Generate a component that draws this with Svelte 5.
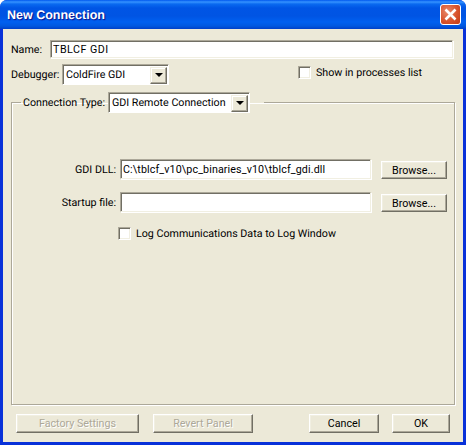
<script>
  let name = 'TBLCF GDI';
  let dllPath = 'C:\\tblcf_v10\\pc_binaries_v10\\tblcf_gdi.dll';
  let startupFile = '';
</script>

<div class="window">
  <header class="titlebar">
    <span class="title">New Connection</span>
    <button class="close" aria-label="Close">
      <svg viewBox="0 0 19 19" width="19" height="19">
        <path d="M4.5 4.5l10 10M14.5 4.5l-10 10" stroke="#fff" stroke-width="2.6" fill="none" />
      </svg>
    </button>
  </header>

  <div class="client">
    <div class="row name-row">
      <span class="label name-label">Name:</span>
      <input class="field name-field" bind:value={name} />
    </div>

    <div class="row debugger-row">
      <span class="label debugger-label">Debugger:</span>
      <div class="combo debugger-combo">
        <span class="combo-text">ColdFire GDI</span>
        <span class="combo-btn"><i class="arrow"></i></span>
      </div>
      <label class="check show-check">
        <span class="box"></span>
        <span>Show in processes list</span>
      </label>
    </div>

    <fieldset class="group">
      <legend class="legend">
        <span class="label type-label">Connection Type:</span>
        <div class="combo type-combo">
          <span class="combo-text">GDI Remote Connection</span>
          <span class="combo-btn"><i class="arrow"></i></span>
        </div>
      </legend>

      <div class="row file-row dll-row">
        <span class="label file-label">GDI DLL:</span>
        <input class="field file-field" bind:value={dllPath} />
        <button class="btn browse">Browse...</button>
      </div>
      <div class="row file-row startup-row">
        <span class="label file-label">Startup file:</span>
        <input class="field file-field" bind:value={startupFile} />
        <button class="btn browse">Browse...</button>
      </div>
      <label class="check log-check">
        <span class="box"></span>
        <span>Log Communications Data to Log Window</span>
      </label>
    </fieldset>

    <footer class="footer">
      <button class="btn factory" disabled>Factory Settings</button>
      <button class="btn revert" disabled>Revert Panel</button>
      <button class="btn cancel">Cancel</button>
      <button class="btn ok">OK</button>
    </footer>
  </div>
</div>

<style>
  :global(body) {
    margin: 0;
    background: #fff;
  }

  .window {
    width: 466px;
    height: 445px;
    display: flex;
    flex-direction: column;
    font-family: Roboto, "Liberation Sans", Arial, sans-serif;
    font-size: 10.7px;
    text-rendering: geometricPrecision;
    color: #000;
    background: #0831d9;
    border-radius: 7px 7px 0 0;
    overflow: hidden;
  }

  .titlebar {
    height: 29px;
    flex: none;
    display: flex;
    align-items: center;
    justify-content: space-between;
    padding: 0 5px 0 7px;
    background: linear-gradient(180deg, #0058ee 0, #3593ff 2px, #0a6af0 4px, #0055e5 8px, #0054e3 16px, #0060f0 22px, #0058e0 26px, #0040c8 29px);
  }

  .title {
    color: #fff;
    font-family: "Liberation Sans", Arial, sans-serif;
    font-weight: bold;
    font-size: 12.5px;
    text-shadow: 1px 1px 1px #0f1089;
  }

  .close {
    width: 21px;
    height: 21px;
    padding: 0;
    display: flex;
    align-items: center;
    justify-content: center;
    border: 1px solid #fff;
    border-radius: 3px;
    background: radial-gradient(circle at 35% 35%, #e88a6c, #d8542e 55%, #c23a14);
  }

  .client {
    flex: 1;
    min-height: 0;
    margin: 0 3px 3px 3px;
    padding: 11px 8px 9px 8px;
    display: flex;
    flex-direction: column;
    background: #ece9d8;
  }

  .row {
    display: flex;
    align-items: center;
  }

  .label {
    white-space: nowrap;
  }

  .name-label {
    width: 39px;
    flex: none;
  }

  .debugger-label {
    width: 51px;
    flex: none;
  }

  .field {
    box-sizing: border-box;
    height: 20px;
    padding: 1px 2px 0 2px;
    font: inherit;
    letter-spacing: 0.12px;
    color: #000;
    background: #fff;
    border: 1px solid;
    border-color: #aca899 #f1efe2 #f1efe2 #aca899;
    box-shadow: inset 1px 1px 0 #716f64, 1px 1px 0 #fff;
    outline: none;
  }

  .name-field {
    width: 403px;
    height: 18px;
    letter-spacing: 0.5px;
  }

  .debugger-row {
    margin-top: 6px;
    height: 21px;
  }

  .combo {
    box-sizing: border-box;
    height: 21px;
    display: flex;
    align-items: center;
    justify-content: space-between;
    padding: 0 1px 0 2px;
    background: #fff;
    border: 1px solid;
    border-color: #aca899 #fff #fff #aca899;
    box-shadow: inset 1px 1px 0 #716f64;
  }

  .combo-text {
    padding-left: 1px;
    white-space: nowrap;
  }

  .combo-btn {
    box-sizing: border-box;
    width: 17px;
    height: 17px;
    margin-top: 1px;
    display: flex;
    align-items: center;
    justify-content: center;
    background: #ece9d8;
    border: 1px solid;
    border-color: #f1efe2 #716f64 #716f64 #f1efe2;
    box-shadow: inset -1px -1px 0 #aca899, inset 1px 1px 0 #fff;
  }

  .arrow {
    width: 0;
    height: 0;
    border-left: 4px solid transparent;
    border-right: 4px solid transparent;
    border-top: 4px solid #000;
  }

  .debugger-combo {
    width: 107px;
  }

  .check {
    display: flex;
    align-items: center;
    gap: 5px;
  }

  .box {
    box-sizing: border-box;
    width: 13px;
    height: 13px;
    flex: none;
    background: #fff;
    border: 1px solid;
    border-color: #aca899 #fff #fff #aca899;
    box-shadow: inset 1px 1px 0 #716f64, inset -1px -1px 0 #f1efe2;
  }

  .show-check {
    margin-left: 129px;
    margin-top: -4px;
  }

  .group {
    flex: 1;
    min-height: 0;
    min-width: 0;
    margin: 7px 0 0 0;
    padding: 0;
    border: 1px solid #aca899;
    box-shadow: 1px 1px 0 #fff, inset 1px 1px 0 #fff;
  }

  .legend {
    display: flex;
    align-items: center;
    margin-left: 9px;
    padding: 0 14px 0 2px;
  }

  .type-label {
    width: 85px;
    flex: none;
  }

  .type-combo {
    width: 142px;
  }

  .file-row {
    height: 20px;
  }

  .dll-row {
    margin-top: 46px;
  }

  .startup-row {
    margin-top: 13px;
  }

  .file-label {
    width: 104px;
    text-align: right;
    margin-right: 4px;
  }

  .file-field {
    width: 251px;
  }

  .btn {
    box-sizing: border-box;
    padding: 0;
    font: inherit;
    color: #000;
    background: #ece9d8;
    border: 1px solid;
    border-color: #fff #716f64 #716f64 #fff;
    box-shadow: inset -1px -1px 0 #aca899, inset 1px 1px 0 #f1efe2;
  }

  .btn:disabled {
    color: #aca899;
    text-shadow: 1px 1px 0 #fff;
  }

  .browse {
    width: 66px;
    height: 18px;
    margin-left: 10px;
    margin-top: 2px;
  }

  .log-check {
    margin-top: 15px;
    margin-left: 106px;
  }

  .footer {
    display: flex;
    margin-top: 9px;
    padding-left: 5px;
  }

  .footer .btn {
    height: 19px;
  }

  .factory {
    width: 123px;
  }

  .revert {
    width: 100px;
    margin-left: 14px;
  }

  .cancel {
    width: 70px;
    margin-left: 56px;
  }

  .ok {
    width: 58px;
    margin-left: 13px;
  }
</style>
